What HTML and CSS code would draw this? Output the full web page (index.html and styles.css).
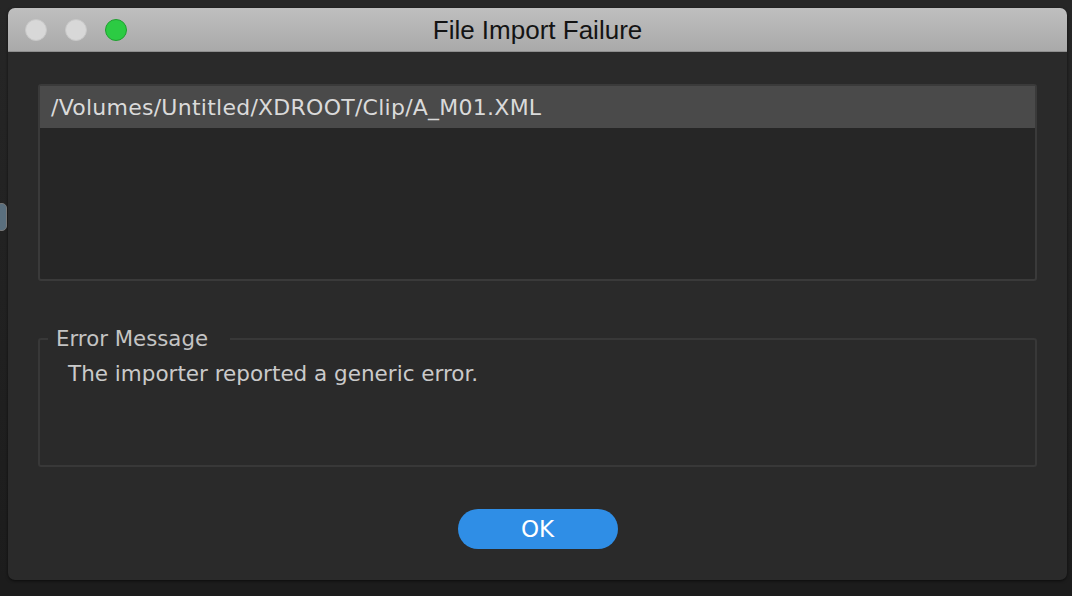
FILE: index.html
```html
<!DOCTYPE html>
<html>
<head>
<meta charset="utf-8">
<link rel="stylesheet" href="styles.css">
</head>
<body>
<div class="desk">
  <div class="window">
    <div class="titlebar">
      <div class="lights">
        <span class="light gray"></span>
        <span class="light gray"></span>
        <span class="light green"></span>
      </div>
      <div class="title">File Import Failure</div>
    </div>
    <div class="content">
      <div class="list">
        <div class="row selected">/Volumes/Untitled/XDROOT/Clip/A_M01.XML</div>
      </div>
      <fieldset class="group">
        <legend class="legend">Error Message</legend>
        <div class="message">The importer reported a generic error.</div>
      </fieldset>
      <div class="actions">
        <button class="ok">OK</button>
      </div>
    </div>
  </div>
  <div class="knob"></div>
</div>
</body>
</html>
```

FILE: styles.css
```css
html, body {
  margin: 0;
  padding: 0;
  background: #1e1e1e;
  width: 1072px;
  height: 596px;
  overflow: hidden;
}
.desk {
  position: relative;
  width: 1072px;
  height: 596px;
  background: linear-gradient(#262626 0, #262626 8px, #1c1c1c 580px);
  padding: 8px 5px 0 8px;
  box-sizing: border-box;
}
.knob {
  position: absolute;
  left: -4px;
  top: 203px;
  width: 9px;
  height: 26px;
  border-radius: 5px;
  background: #5a6f7e;
  border: 1px solid #777;
}
.window {
  width: 1059px;
  height: 572px;
  border-radius: 7px;
  background: #2a2a2a;
  overflow: hidden;
  display: flex;
  flex-direction: column;
  box-shadow: 0 1px 3px rgba(0,0,0,0.6);
}
.titlebar {
  height: 44px;
  flex: none;
  background: linear-gradient(#bfbfbf, #a9a9a9);
  border-bottom: 1px solid #8e8e8e;
  position: relative;
  display: flex;
  align-items: center;
  box-sizing: border-box;
}
.lights {
  display: flex;
  gap: 18px;
  padding-left: 17px;
}
.light {
  width: 22px;
  height: 22px;
  border-radius: 50%;
  box-sizing: border-box;
}
.light.gray {
  background: #d8d8d8;
  border: 1px solid #c8c8c8;
}
.light.green {
  background: #2ccb43;
  border: 1px solid #1fa02f;
}
.title {
  position: absolute;
  left: 0;
  right: 0;
  top: 0;
  bottom: 0;
  display: flex;
  align-items: center;
  justify-content: center;
  font-family: "Liberation Sans", Arial, sans-serif;
  font-size: 26px;
  color: #141414;
  padding-top: 2px;
}
.content {
  padding: 32px 30px 0 30px;
  display: flex;
  flex-direction: column;
}
.list {
  height: 197px;
  border: 2px solid #3a3a3a;
  border-radius: 3px;
  background: #262626;
  box-sizing: border-box;
}
.row {
  height: 42px;
  display: flex;
  align-items: center;
  padding-left: 11px;
  font-family: "DejaVu Sans", Verdana, sans-serif;
  font-size: 22px;
  letter-spacing: 0.25px;
  color: #dadada;
}
.row.selected {
  background: #4a4a4a;
}
.group {
  margin: 45px 0 0 0;
  height: 141px;
  border: 2px solid #383838;
  border-radius: 3px;
  padding: 0 0 0 28px;
  box-sizing: border-box;
}
.legend {
  font-family: "DejaVu Sans", Verdana, sans-serif;
  font-size: 21.3px;
  color: #c4c4c4;
  padding: 0 22px 0 8px;
  margin-left: -20px;
}
.message {
  font-family: "DejaVu Sans", Verdana, sans-serif;
  font-size: 21.5px;
  color: #cacaca;
  margin-top: 10px;
}
.actions {
  display: flex;
  justify-content: center;
  padding-top: 42px;
}
.ok {
  width: 160px;
  height: 40px;
  border-radius: 20px;
  border: none;
  background: #2f8ee6;
  color: #ffffff;
  font-family: "DejaVu Sans", Verdana, sans-serif;
  font-size: 23px;
  padding: 0;
}
```
